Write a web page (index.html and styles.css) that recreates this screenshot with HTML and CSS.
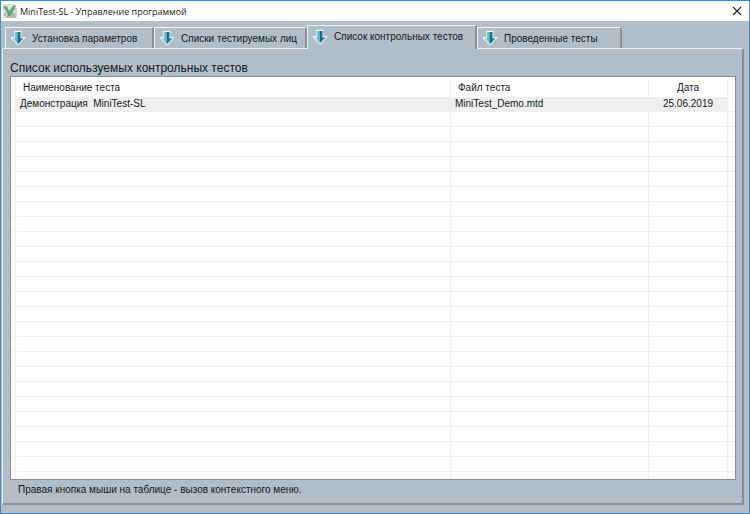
FILE: index.html
```html
<!DOCTYPE html>
<html lang="ru">

<head>
    <meta charset="UTF-8">
    <meta name="viewport" content="width=device-width, initial-scale=1.0">
    <title>MiniTest-SL - Управление программой</title>
    <link rel="stylesheet" href="styles.css">
</head>

<body>
    <!-- общая иконка вкладок -->
    <svg class="sprite" aria-hidden="true">
        <defs>
            <linearGradient id="left" x1="0" x2="1" y1="0" y2="0">
                <stop offset="0" stop-color="#b9e3ee" />
                <stop offset="1" stop-color="#4fabc6" />
            </linearGradient>
            <linearGradient id="right" x1="0" x2="1" y1="0" y2="0">
                <stop offset="0" stop-color="#1d5f7b" />
                <stop offset="1" stop-color="#4f9db2" />
            </linearGradient>
            <symbol id="arrow" viewBox="0 0 16 16">
                <path d="M5 1.5h5.5v6.3h4L8 14.6 1.5 7.8H5z" fill="#e8f5f8" stroke="#e8f5f8" stroke-width="1.4" stroke-linejoin="round" />
                <path d="M5 2h3v12L2.2 8.3H5z" fill="url(#left)" />
                <path d="M8 2h2.5v6.3h3.3L8 14z" fill="url(#right)" />
            </symbol>
        </defs>
    </svg>

    <div class="window">
        <header class="titlebar">
            <svg class="logo" viewBox="0 0 14 14" aria-hidden="true">
                <path d="M0 0h12v14H0z" fill="#dde4df" />
                <path d="M0 2h3v3H0zM9 9h3v3H9zM1 9h2v3H1z" fill="#a9b8ae" />
                <path d="M1 3l3-1 2 5 5-6 2 1-5 10H5z" fill="#69a676" />
                <path d="M3 13h10V4" fill="none" stroke="#6a6f6c" stroke-width="0.7" />
            </svg>
            <h1>MiniTest-SL - Управление программой</h1>
            <button class="close" type="button" aria-label="Закрыть">
                <svg viewBox="0 0 10 10"><path d="M1 1l8 8M9 1L1 9" stroke="#222" stroke-width="1.1" /></svg>
            </button>
        </header>

        <main class="content">
            <nav class="tabs" role="tablist">
                <button class="tab tab-params" type="button" role="tab"><svg><use href="#arrow" /></svg>Установка параметров</button>
                <button class="tab tab-persons" type="button" role="tab"><svg><use href="#arrow" /></svg>Списки тестируемых лиц</button>
                <button class="tab tab-tests active" type="button" role="tab" aria-selected="true"><svg><use href="#arrow" /></svg>Список контрольных тестов</button>
                <button class="tab tab-done" type="button" role="tab"><svg><use href="#arrow" /></svg>Проведенные тесты</button>
            </nav>

            <section class="panel">
                <h2>Список используемых контрольных тестов</h2>
                <div class="list">
                    <table>
                        <colgroup>
                            <col class="col-edge">
                            <col>
                            <col class="col-file">
                            <col class="col-date">
                            <col class="col-end">
                        </colgroup>
                        <thead>
                            <tr>
                                <td></td>
                                <th>Наименование теста</th>
                                <th>Файл теста</th>
                                <th class="date">Дата</th>
                                <td></td>
                            </tr>
                        </thead>
                        <tbody id="rows">
                            <tr class="selected">
                                <td></td>
                                <td>Демонстрация&nbsp; MiniTest-SL</td>
                                <td>MiniTest_Demo.mtd</td>
                                <td class="date">25.06.2019</td>
                                <td></td>
                            </tr>
                        </tbody>
                    </table>
                </div>
                <p class="hint">Правая кнопка мыши на таблице - вызов контекстного меню.</p>
            </section>
        </main>
    </div>

    <script>
        // пустые строки до низа таблицы
        const rows = document.getElementById('rows');
        const free = document.querySelector('.list').clientHeight - 35;
        for (let i = 0; i < Math.ceil(free / 15); i++) {
            const row = rows.insertRow();
            for (let j = 0; j < 5; j++) {
                row.insertCell();
            }
        }
    </script>
</body>

</html>
```
FILE: styles.css
```css
:root {
    --frame: #4489c2;
    --face: #b1bec8;
    --light: #f0f3f5;
    --shadow: #8b9095;
    --grid: #eeeff0;
}

* {
    box-sizing: border-box;
}

body {
    margin: 0;
    color: #16191c;
    font-family: "Liberation Sans", Arial, sans-serif;
    font-size: 10px;
}

button {
    margin: 0;
    color: inherit;
    font: inherit;
}

.sprite {
    position: absolute;
    width: 0;
    height: 0;
}

.window {
    display: flex;
    flex-direction: column;
    height: 100vh;
    border: 1px solid var(--frame);
    background: var(--face);
}

.titlebar {
    display: flex;
    align-items: center;
    height: 20px;
    padding: 0 7px 0 2px;
    background: #fff;
}

.titlebar h1 {
    flex: 1;
    margin: 0 0 0 3px;
    font: 9px "Open Sans", "Noto Sans", sans-serif;
}

.logo {
    width: 14px;
    height: 14px;
}

.close {
    display: flex;
    padding: 0;
    border: 0;
    background: none;
}

.close svg {
    width: 10px;
    height: 10px;
}

.content {
    display: flex;
    flex: 1;
    flex-direction: column;
    min-height: 0;
    padding: 4px 5px 8px 1px;
}

.tabs {
    display: flex;
    align-items: flex-end;
    padding-left: 3px;
}

.tab {
    display: flex;
    align-items: center;
    gap: 6px;
    height: 21px;
    padding: 0 0 0 4px;
    border: solid;
    border-width: 1px 2px 0 1px;
    border-color: var(--light) var(--shadow) var(--light) var(--light);
    background: var(--face);
    white-space: nowrap;
}

.tab svg {
    flex: none;
    width: 16px;
    height: 16px;
}

.tab-params {
    width: 149px;
}

.tab-persons {
    width: 153px;
}

.tab-tests {
    width: 170px;
}

.tab-done {
    width: 145px;
}

.tab.active {
    z-index: 1;
    height: 24px;
    margin-bottom: -1px;
    padding-bottom: 2px;
}

.panel {
    display: flex;
    flex: 1;
    flex-direction: column;
    min-height: 0;
    padding: 11px 6px 6px 7px;
    border: solid;
    border-width: 1px 2px 2px 1px;
    border-color: var(--light) var(--shadow) var(--shadow) var(--light);
}

.panel h2 {
    margin: 0;
    font-size: 12px;
    font-weight: normal;
    line-height: 16px;
}

.list {
    flex: 1;
    min-height: 0;
    overflow: hidden;
    padding: 1px 0 0 1px;
    border: 1px solid #848b91;
    background: #fff;
}

table {
    width: 100%;
    border-collapse: separate;
    border-spacing: 0;
    table-layout: fixed;
}

.col-edge {
    width: 4px;
}

.col-file {
    width: 198px;
}

.col-date {
    width: 79px;
}

.col-end {
    width: 7px;
}

th,
td {
    height: 15px;
    padding: 0 0 0 4px;
    border-right: 1px solid var(--grid);
    border-bottom: 1px solid var(--grid);
    font-weight: normal;
    line-height: 14px;
    text-align: left;
    white-space: nowrap;
}

td:first-child,
td:last-child {
    padding: 0;
}

td:last-child {
    border-right: 0;
}

thead th,
thead td {
    height: 19px;
    border-bottom: 0;
}

thead th {
    padding-left: 7px;
}

th.date,
td.date {
    padding: 0;
    text-align: center;
}

.selected td:not(:first-child):not(:last-child) {
    border-color: #efefef;
    background: #efefef;
}

.hint {
    margin: 0;
    padding: 3px 8px 0;
    line-height: 14px;
}
```
